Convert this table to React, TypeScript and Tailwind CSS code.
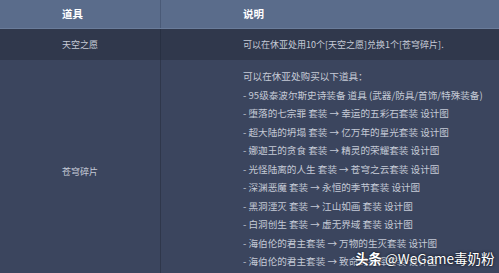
const cjk = { fontFamily: '"Noto Sans CJK SC", "Noto Sans", sans-serif' }

const shopLines = [
  '可以在休亚处购买以下道具：',
  '- 95级泰波尔斯史诗装备 道具 (武器/防具/首饰/特殊装备)',
  '- 堕落的七宗罪 套装 → 幸运的五彩石套装 设计图',
  '- 超大陆的坍塌 套装 → 亿万年的星光套装 设计图',
  '- 娜迦王的贪食 套装 → 精灵的荣耀套装 设计图',
  '- 光怪陆离的人生 套装 → 苍穹之云套装 设计图',
  '- 深渊恶魔 套装 → 永恒的季节套装 设计图',
  '- 黑洞湮灭 套装 → 江山如画 套装 设计图',
  '- 白洞创生 套装 → 虚无界域 套装 设计图',
  '- 海伯伦的君主套装 → 万物的生灭套装 设计图',
  '- 海伯伦的君主套装 → 致命的抉择套装 设计图',
]

export default function App() {
  return (
    <div className="relative w-[499px] h-[273px] overflow-hidden bg-[#3b455e]" style={cjk}>
      {/* header */}
      <div className="flex h-[29px] bg-[#5a6c8b] border-b border-[#6a7c9a] text-white font-bold text-[10.5px]">
        <div className="w-[161px] flex items-center pl-[62px] border-r border-[#4a5a77]">道具</div>
        <div className="flex-1 flex items-center pl-[82px]">说明</div>
      </div>

      {/* row 1 */}
      <div className="flex h-[31px] bg-[#30384c] text-[#c5cad6] text-[9px]">
        <div className="w-[161px] flex items-center pl-[62px] border-r border-[#283042]">天空之愿</div>
        <div className="flex-1 flex items-center pl-[82px]">可以在休亚处用10个[天空之愿]兑换1个[苍穹碎片].</div>
      </div>

      {/* row 2 */}
      <div className="flex text-[#c5cad6] text-[9px]">
        <div className="w-[161px] shrink-0 flex items-center pl-[62px] border-r border-[#2f374b] pt-[4px]">
          苍穹碎片
        </div>
        <div className="flex-1 pl-[82px] pt-[7px] pb-[8px] text-[9.6px] leading-[18.5px] whitespace-nowrap">
          {shopLines.map((line, i) => (
            <div key={i}>{line}</div>
          ))}
        </div>
      </div>

      {/* watermark */}
      <div
        className="absolute left-[355px] top-[250px] text-white text-[13.5px] leading-[17px] whitespace-nowrap"
        style={{ textShadow: '0 0 2px #1a1f2b, 0 0 3px #1a1f2b' }}
      >
        <span className="font-bold">头条</span> @WeGame毒奶粉
      </div>
    </div>
  )
}
